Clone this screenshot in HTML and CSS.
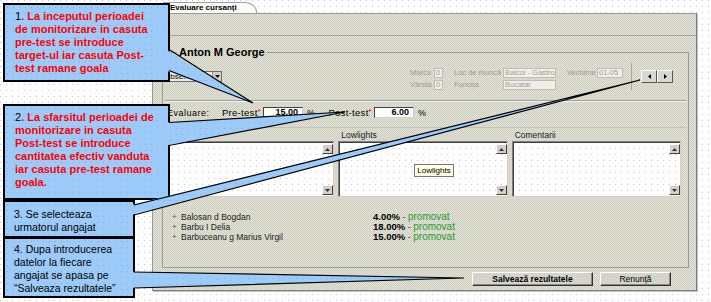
FILE: index.html
```html
<!DOCTYPE html>
<html lang="ro">
<head>
<meta charset="utf-8">
<title>Evaluare cursanți</title>
<link rel="stylesheet" href="styles.css">
</head>
<body>
<div class="page">
  <div class="app">
    <div class="tabs"><div class="tab">Evaluare cursanți</div></div>
    <div class="panel">
      <div class="band"></div>
      <fieldset class="emp">
        <legend>Anton M George</legend>
        <div class="info">
          <div class="select"><span class="sel-val">Absent</span><span class="sel-arrow"><svg width="5" height="3" viewBox="0 0 5 3"><path d="M0 0h5L2.5 3z" fill="#000"/></svg></span></div>
          <div class="fields">
            <span class="f-lab">Marca</span><span class="f-in w9">0</span>
            <span class="f-lab">Loc de muncă</span><span class="f-in w53">Balcoi - Gastro</span>
            <span class="f-lab">Vechime</span><span class="f-in w26">01-05</span>
            <span class="f-lab">Vârsta</span><span class="f-in w9">0</span>
            <span class="f-lab">Funcția</span><span class="f-in w53">Bucatar</span>
          </div>
          <div class="vsep"></div>
          <div class="nav">
            <span class="nbtn"><svg width="3" height="5" viewBox="0 0 3 5"><path d="M3 0v5L0 2.5z" fill="#000"/></svg></span>
            <span class="nbtn"><svg width="3" height="5" viewBox="0 0 3 5"><path d="M0 0v5L3 2.5z" fill="#000"/></svg></span>
          </div>
        </div>
        <div class="hr"></div>
        <div class="eval">
          <span class="ev-title">Evaluare:</span>
          <span class="ev-lab">Pre-test<i>*</i></span><span class="ev-in">15.00</span><span class="pct">%</span>
          <span class="ev-lab">Post-test<i>*</i></span><span class="ev-in">6.00</span><span class="pct">%</span>
        </div>
        <div class="hr2"></div>
        <div class="notes">
          <div class="note">
            <div class="note-h">Highlights</div>
            <div class="ta"><div class="ta-body"></div><div class="ta-sb"><span class="sb"><svg width="5" height="3" viewBox="0 0 5 3"><path d="M0 3h5L2.5 0z" fill="#333"/></svg></span><span class="sb"><svg width="5" height="3" viewBox="0 0 5 3"><path d="M0 0h5L2.5 3z" fill="#333"/></svg></span></div></div>
          </div>
          <div class="note">
            <div class="note-h">Lowlights</div>
            <div class="ta"><div class="ta-body"><span class="tip">Lowlights</span></div><div class="ta-sb"><span class="sb"><svg width="5" height="3" viewBox="0 0 5 3"><path d="M0 3h5L2.5 0z" fill="#333"/></svg></span><span class="sb"><svg width="5" height="3" viewBox="0 0 5 3"><path d="M0 0h5L2.5 3z" fill="#333"/></svg></span></div></div>
          </div>
          <div class="note">
            <div class="note-h">Comentarii</div>
            <div class="ta"><div class="ta-body"></div><div class="ta-sb"><span class="sb"><svg width="5" height="3" viewBox="0 0 5 3"><path d="M0 3h5L2.5 0z" fill="#333"/></svg></span><span class="sb"><svg width="5" height="3" viewBox="0 0 5 3"><path d="M0 0h5L2.5 3z" fill="#333"/></svg></span></div></div>
          </div>
        </div>
        <div class="list">
          <div class="row"><span class="plus">+</span><span class="name">Balosan d Bogdan</span><span class="res"><b>4.00%</b> - <em>promovat</em></span></div>
          <div class="row"><span class="plus">+</span><span class="name">Barbu I Delia</span><span class="res"><b>18.00%</b> - <em>promovat</em></span></div>
          <div class="row"><span class="plus">+</span><span class="name">Barbuceanu g Marius Virgil</span><span class="res"><b>15.00%</b> - <em>promovat</em></span></div>
        </div>
      </fieldset>
      <div class="actions">
        <button class="btn primary" type="button">Salvează rezultatele</button>
        <button class="btn sec" type="button">Renunță</button>
      </div>
    </div>
  </div>

  <div class="callout c1"><span class="num">1</span>. La inceputul perioadei<br>de monitorizare in casuta<br>pre-test se introduce<br>target-ul iar casuta Post-<br>test ramane goala</div>
  <div class="callout c2"><span class="num">2</span>. La sfarsitul perioadei de<br>monitorizare in casuta<br>Post-test se introduce<br>cantitatea efectiv vanduta<br>iar casuta pre-test ramane<br>goala.</div>
  <div class="callout c3">3. Se selecteaza<br>urmatorul angajat</div>
  <div class="callout c4">4. Dupa introducerea<br>datelor la fiecare<br>angajat se apasa pe<br>“Salveaza rezultatele”</div>

  <svg class="pointers" width="711" height="302" viewBox="0 0 711 302">
    <defs>
      <pattern id="bd" width="6" height="6" patternUnits="userSpaceOnUse">
        <rect width="6" height="6" fill="#9ccbfa"/>
        <rect x="2" y="2" width="1" height="1" fill="#86acd6"/>
      </pattern>
    </defs>
    <g fill="url(#bd)">
      <polygon points="166,49.5 253,103 166,70.5"/>
      <polygon points="166,122.5 345,112 166,145.5"/>
      <polygon points="131,205 640,80 131,215"/>
      <polygon points="131,272 464,278 131,288"/>
    </g>
    <g fill="none" stroke="#000" stroke-width="1.2">
      <polyline points="169,49.5 253,103 169,70.5"/>
      <polyline points="169,122.5 345,112 169,145.5"/>
      <polyline points="134,205 640,80 134,215"/>
      <polyline points="134,272 464,278 134,288"/>
    </g>
  </svg>
</div>
</body>
</html>
```

FILE: styles.css
```css
* { box-sizing: border-box; }
html, body { margin: 0; padding: 0; }
body { font-family: "Liberation Sans", Arial, sans-serif; color: #000; }

.page {
  position: relative;
  width: 711px;
  height: 302px;
  overflow: hidden;
  background: conic-gradient(from 270deg at 1px 1px, #c6c6c6 90deg, #fff 0) 0 0 / 6px 6px;
}

.app { margin-left: 152px; width: 545px; }

.tabs { height: 13px; padding-left: 11px; display: flex; align-items: flex-end; }
.tab {
  width: 94px;
  height: 11px;
  border: 1px solid #a0a0a0;
  border-bottom: 0;
  border-top-right-radius: 12px 10px;
  background: #fbfbf8;
  font-weight: bold;
  font-size: 8px;
  line-height: 10px;
  padding-left: 6px;
  white-space: nowrap;
}

.panel {
  border: 1px solid #9a9a9a;
  border-right-color: #7c7c7c;
  border-bottom-color: #7c7c7c;
  background: repeating-conic-gradient(#cdcdc4 0 25%, #e3e3d4 0 50%) 0 0 / 2px 2px;
  box-shadow: 1px 1px 0 #c4c4c4;
}
.band { height: 22px; border-bottom: 1px solid #a4a49c; }

.emp {
  margin: 9px 7px 0 9px;
  padding: 0 0 25px 0;
  border: 1px solid #9c9c96;
  min-width: 0;
}
.emp legend {
  margin-left: 14px;
  padding: 0 2px;
  font-size: 11px;
  font-weight: bold;
  line-height: 14px;
}

.info { display: flex; align-items: center; height: 27px; margin: 4px 15px 0 0; }
.select { display: flex; width: 59px; height: 11px; border: 1px solid #6e6e6e; background: #ecece4; }
.sel-val { flex: 1; font-size: 8px; line-height: 9px; padding-left: 1px; }
.sel-arrow {
  width: 9px;
  border-left: 1px solid #8a8a8a;
  background: #d4d0c8;
  display: flex;
  align-items: center;
  justify-content: center;
}
.fields {
  margin-left: auto;
  align-self: flex-end;
  display: grid;
  grid-template-columns: 24px 20px 49px 64px 30px 26px;
  grid-auto-rows: 10px;
  row-gap: 2px;
}
.f-lab { font-size: 7.5px; line-height: 10px; color: #9a9a9a; white-space: nowrap; }
.f-in {
  height: 10px;
  border: 1px solid #bdbdb6;
  background: #efefe8;
  font-size: 7.5px;
  line-height: 8px;
  color: #9c9c9c;
  padding: 0 1px;
  white-space: nowrap;
  overflow: hidden;
}
.w9 { width: 9px; }
.w53 { width: 53px; }
.w26 { width: 26px; }
.vsep { align-self: stretch; width: 1px; background: #a6a6a0; margin: 0 9px 0 8px; }
.nav { display: flex; }
.nbtn {
  width: 16px;
  height: 13px;
  border: 1px solid;
  border-color: #fff #555 #555 #fff;
  background: #d8d8d0;
  display: flex;
  align-items: center;
  justify-content: center;
}

.hr { margin: 10px 2px 0; border-top: 1px solid #a0a09a; border-bottom: 1px solid #f2f2ec; }

.eval { display: flex; align-items: center; height: 11px; margin-top: 5px; padding-left: 4px; font-size: 9.5px; }
.ev-title { width: 39px; font-size: 9px; letter-spacing: 0.5px; }
.ev-lab { width: 55px; text-align: right; margin-right: 2px; white-space: nowrap; letter-spacing: 0.3px; }
.ev-lab i { font-style: normal; color: #e00000; font-size: 8px; vertical-align: 2px; }
.ev-in {
  width: 40px;
  height: 11px;
  border: 1px solid #404040;
  border-right-color: #d0d0d0;
  border-bottom-color: #d0d0d0;
  background: #fff;
  font-weight: bold;
  font-size: 9px;
  line-height: 9px;
  text-align: right;
  padding-right: 4px;
}
.pct { width: 10px; margin-left: 4px; font-size: 9px; }

.hr2 { margin: 9px 2px 0; border-top: 1px solid #c2c2ba; }

.notes {
  display: grid;
  grid-template-columns: 1fr 1fr 1fr;
  column-gap: 4px;
  margin: 2px 7px 0 2px;
}
.note-h { height: 11px; font-size: 8.5px; line-height: 11px; padding-left: 3px; color: #222; }
.ta {
  height: 56px;
  display: flex;
  border-top: 1px solid #808080;
  border-left: 1px solid #808080;
  border-right: 1px solid #e8c4c4;
  border-bottom: 1px solid #e8c4c4;
  box-shadow: inset 1px 1px 0 #404040;
  background: conic-gradient(from 270deg at 1px 1px, #c6c6c6 90deg, #fff 0) 0 0 / 6px 6px;
  padding: 1px 0 0 1px;
}
.ta-body { flex: 1; position: relative; }
.ta-sb { width: 11px; display: flex; flex-direction: column; justify-content: space-between; padding: 1px 0; }
.sb {
  width: 11px;
  height: 10px;
  border: 1px solid;
  border-color: #fff #404040 #404040 #fff;
  background: #d4d0c8;
  display: flex;
  align-items: center;
  justify-content: center;
}
.tip {
  position: absolute;
  left: 74px;
  top: 21px;
  border: 1px solid #777;
  background: #ffffe1;
  font-size: 8px;
  line-height: 9px;
  padding: 1px 2px;
  white-space: nowrap;
}

.list { margin-top: 15px; padding-left: 9px; }
.row { display: grid; grid-template-columns: 9px 192px auto; height: 10px; line-height: 10px; align-items: center; }
.plus { font-size: 8px; color: #555; }
.name { font-size: 8.5px; color: #222; white-space: nowrap; }
.res { font-size: 9px; white-space: nowrap; color: #444; }
.res b { font-size: 9.5px; color: #000; }
.res em { font-style: normal; color: #2c9a2c; font-size: 10px; }

.actions { display: flex; justify-content: flex-end; gap: 7px; padding: 4px 25px 4px 0; }
.btn {
  height: 14px;
  font-family: "Liberation Sans", Arial, sans-serif;
  font-size: 8.5px;
  line-height: 12px;
  color: #000;
  border: 1px solid;
  border-color: #fff #303030 #303030 #fff;
  box-shadow: inset -1px -1px 0 #8a8a8a;
  background: #d4d4ca;
  padding: 0;
  margin: 0;
}
.btn.primary { width: 121px; font-weight: bold; }
.btn.sec { width: 71px; }

.callout {
  position: absolute;
  border: 2px solid #000;
  background: conic-gradient(from 270deg at 1px 1px, #86acd6 90deg, #9ccbfa 0) 2px 2px / 6px 6px;
  white-space: nowrap;
  line-height: 13px;
}
.c1, .c2 {
  left: 3px;
  width: 167px;
  padding: 5px 0 0 10px;
  font-size: 11px;
  font-weight: bold;
  color: #ff0000;
}
.c1 { top: 3px; height: 79px; }
.c2 { top: 104px; height: 96px; }
.num { color: #000; font-weight: normal; }
.c3, .c4 {
  left: 3px;
  width: 132px;
  font-size: 10.5px;
  color: #000;
  padding-left: 9px;
}
.c3 { top: 200px; height: 38px; padding-top: 6px; }
.c4 { top: 237px; height: 61px; padding-top: 4px; }

.pointers { position: absolute; left: 0; top: 0; pointer-events: none; }
```
